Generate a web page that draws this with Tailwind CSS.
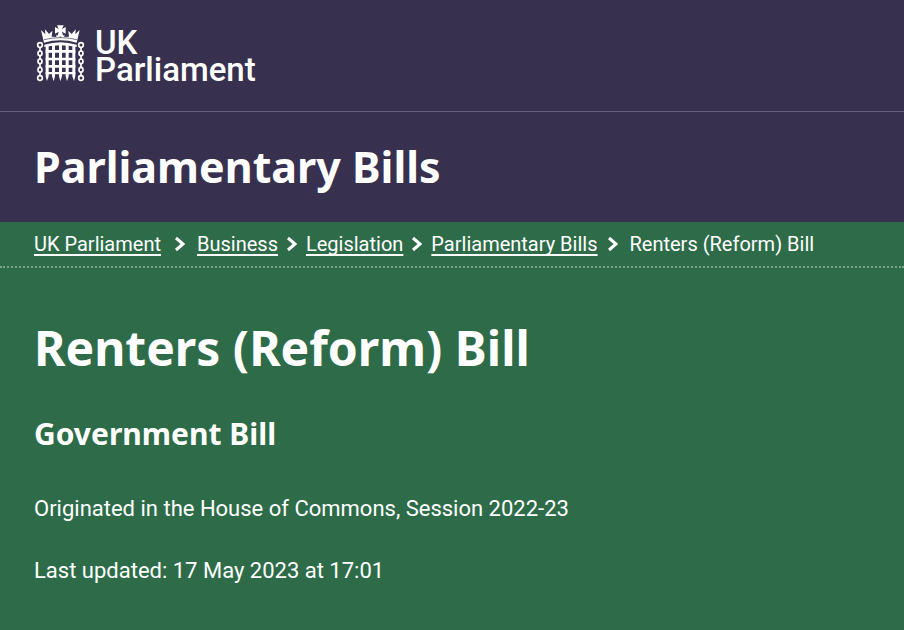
<!DOCTYPE html>
<html lang="en-GB">
<head>
<meta charset="utf-8">
<meta name="viewport" content="width=device-width, initial-scale=1">
<title>Renters (Reform) Bill - Parliamentary Bills - UK Parliament</title>
<script src="https://cdn.jsdelivr.net/npm/@tailwindcss/browser@4"></script>
</head>
<body class="min-h-screen bg-[#2e6c49] font-[Roboto,sans-serif] text-white">
<header class="bg-[#37314f]">
  <div class="border-b border-[#655f79] px-9 pt-6 pb-7">
    <a href="#" class="inline-flex items-start gap-[9px] align-top" aria-label="UK Parliament">
      <svg class="mt-px h-[58px] w-[50px] shrink-0" viewBox="18 14 150 174" fill="none" stroke="#fff" aria-hidden="true">
        <g fill="#fff" stroke="none">
          <path d="M81 15h20l-5 11 11-6v20l-11-6 4 15h-18l4-15-11 6V20l11 6z"/>
          <path d="M33 29l13 13-1-15 12 14 10-10-2 18 14 1v-7l12 9 12-9v7l14-1-2-18 10 10 12-14-1 15 13-13-9 38Q91 53 42 67z"/>
          <path d="M43 73Q91 58 140 73v7Q91 69 43 80z"/>
          <path d="M47 74h9v94l-5 14-4-14zM66 72h9v96l-4 15-5-15zM87 70h9v98l-5 15-4-15zM107 72h9v96l-5 15-4-15zM127 74h9v94l-4 14-5-14z"/>
          <path d="M47 89h89v8H47zM47 112h89v8H47zM47 134h89v8H47zM47 155h89v7H47z"/>
        </g>
        <path d="M42 58Q91 46 141 58" stroke="#37314f" stroke-width="2"/>
        <g stroke-width="5">
          <circle cx="30" cy="74" r="7"/><ellipse cx="30" cy="99" rx="6" ry="7"/><ellipse cx="30" cy="123" rx="6" ry="7"/><ellipse cx="30" cy="148" rx="6" ry="7"/><circle cx="30" cy="173" r="7"/>
          <circle cx="153" cy="74" r="7"/><ellipse cx="153" cy="99" rx="6" ry="7"/><ellipse cx="153" cy="123" rx="6" ry="7"/><ellipse cx="153" cy="148" rx="6" ry="7"/><circle cx="153" cy="173" r="7"/>
          <path d="M30 81v11M30 106v10M30 130v11M30 155v11M153 81v11M153 106v10M153 130v11M153 155v11"/>
        </g>
      </svg>
      <span class="flex flex-col pt-[5px] text-[33px] leading-[27px] font-medium"><span>UK</span><span>Parliament</span></span>
    </a>
  </div>
  <p class="px-[34px] py-7 font-['Noto_Sans',sans-serif] text-[43px] leading-[54px] font-bold">Parliamentary Bills</p>
</header>
<nav aria-label="Breadcrumb" class="border-b-2 border-dotted border-[#7ba58b] px-[34px] py-2">
  <ol class="flex flex-wrap items-center text-[20px] leading-7">
    <li><a href="#" class="underline decoration-2 underline-offset-3 [text-decoration-skip-ink:none]">UK Parliament</a></li>
    <li aria-hidden="true" class="pr-3 pl-[14px]"><svg class="h-4 w-[10px]" viewBox="0 0 10 16" fill="none" stroke="#fff" stroke-width="3"><path d="M1 2l7 6-7 6"/></svg></li>
    <li><a href="#" class="underline decoration-2 underline-offset-3 [text-decoration-skip-ink:none]">Business</a></li>
    <li aria-hidden="true" class="px-[9px]"><svg class="h-4 w-[10px]" viewBox="0 0 10 16" fill="none" stroke="#fff" stroke-width="3"><path d="M1 2l7 6-7 6"/></svg></li>
    <li><a href="#" class="underline decoration-2 underline-offset-3 [text-decoration-skip-ink:none]">Legislation</a></li>
    <li aria-hidden="true" class="px-[9px]"><svg class="h-4 w-[10px]" viewBox="0 0 10 16" fill="none" stroke="#fff" stroke-width="3"><path d="M1 2l7 6-7 6"/></svg></li>
    <li><a href="#" class="underline decoration-2 underline-offset-3 [text-decoration-skip-ink:none]">Parliamentary Bills</a></li>
    <li aria-hidden="true" class="pr-3 pl-[10px]"><svg class="h-4 w-[10px]" viewBox="0 0 10 16" fill="none" stroke="#fff" stroke-width="3"><path d="M1 2l7 6-7 6"/></svg></li>
    <li aria-current="page">Renters (Reform) Bill</li>
  </ol>
</nav>
<main class="px-[34px] pt-[50px] pb-8">
  <h1 class="font-['Noto_Sans',sans-serif] text-[48px] leading-[60px] font-bold">Renters (Reform) Bill</h1>
  <h2 class="mt-9 font-['Noto_Sans',sans-serif] text-[30px] leading-[40px] font-bold">Government Bill</h2>
  <p class="mt-[39px] text-[22px] leading-8">Originated in the House of Commons, Session 2022-23</p>
  <p class="mt-[30px] text-[22px] leading-8">Last updated: 17 May 2023 at 17:01</p>
</main>
</body>
</html>
